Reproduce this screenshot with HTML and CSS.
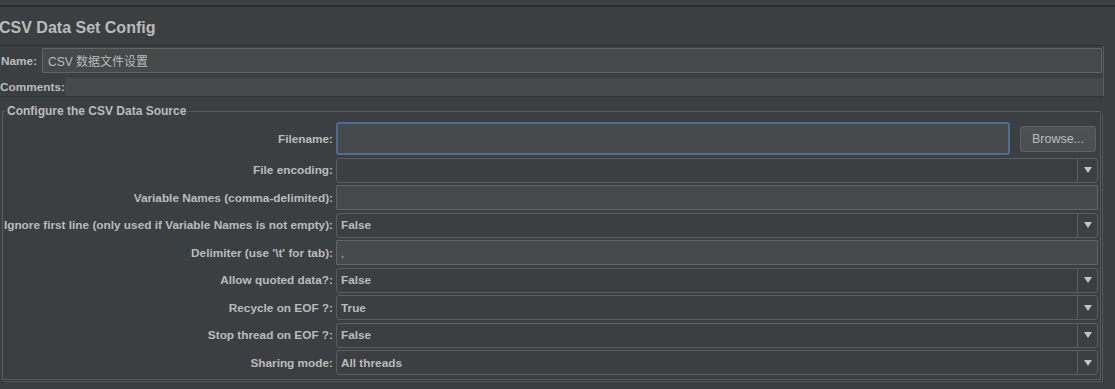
FILE: index.html
```html
<!DOCTYPE html>
<html lang="en">
<head>
    <meta charset="UTF-8">
    <title>CSV Data Set Config</title>
    <link rel="stylesheet" href="styles.css">
</head>
<body>
    <div class="top-strip"></div>

    <h1 class="title">CSV Data Set Config</h1>

    <div class="name-panel">
        <div class="name-row">
            <span class="lbl">Name:</span>
            <div class="text-field">CSV 数据文件设置</div>
        </div>
        <div class="comments-row">
            <span class="lbl">Comments:</span>
            <div class="comments-field"></div>
        </div>
    </div>

    <fieldset class="group">
        <legend>Configure the CSV Data Source</legend>
        <div class="form">
            <label class="row-lbl tall">Filename:</label>
            <div class="file-cell">
                <div class="text-field focused"></div>
                <button class="btn">Browse...</button>
            </div>

            <label class="row-lbl">File encoding:</label>
            <div class="combo"><span class="val"></span><span class="arrow"><svg width="8" height="6" viewBox="0 0 8 6"><polygon points="0,0 8,0 4,6" fill="#c4c4c4"/></svg></span></div>

            <label class="row-lbl">Variable Names (comma-delimited):</label>
            <div class="text-field"></div>

            <label class="row-lbl">Ignore first line (only used if Variable Names is not empty):</label>
            <div class="combo"><span class="val">False</span><span class="arrow"><svg width="8" height="6" viewBox="0 0 8 6"><polygon points="0,0 8,0 4,6" fill="#c4c4c4"/></svg></span></div>

            <label class="row-lbl">Delimiter (use '\t' for tab):</label>
            <div class="text-field plain">,</div>

            <label class="row-lbl">Allow quoted data?:</label>
            <div class="combo"><span class="val">False</span><span class="arrow"><svg width="8" height="6" viewBox="0 0 8 6"><polygon points="0,0 8,0 4,6" fill="#c4c4c4"/></svg></span></div>

            <label class="row-lbl">Recycle on EOF ?:</label>
            <div class="combo"><span class="val">True</span><span class="arrow"><svg width="8" height="6" viewBox="0 0 8 6"><polygon points="0,0 8,0 4,6" fill="#c4c4c4"/></svg></span></div>

            <label class="row-lbl">Stop thread on EOF ?:</label>
            <div class="combo"><span class="val">False</span><span class="arrow"><svg width="8" height="6" viewBox="0 0 8 6"><polygon points="0,0 8,0 4,6" fill="#c4c4c4"/></svg></span></div>

            <label class="row-lbl">Sharing mode:</label>
            <div class="combo"><span class="val">All threads</span><span class="arrow"><svg width="8" height="6" viewBox="0 0 8 6"><polygon points="0,0 8,0 4,6" fill="#c4c4c4"/></svg></span></div>
        </div>
    </fieldset>
</body>
</html>
```

FILE: styles.css
```css
body {
    margin: 0;
    width: 1115px;
    height: 389px;
    overflow: hidden;
    background: #3c3f41;
    color: #bbbbbb;
    font-family: "Liberation Sans", Arial, "Noto Sans CJK SC", sans-serif;
    font-size: 11.8px;
}

.top-strip {
    height: 5px;
    background: #3e4143;
    border-bottom: 2px solid #2b2d2f;
}

.title {
    margin: 11px 0 0 -1px;
    font-size: 16px;
    line-height: 20px;
    font-weight: bold;
    color: #bbbbbb;
}

/* name + comments block */
.name-panel {
    margin-top: 7px;
    width: 1103px;
    border-top: 1px solid #2f3133;
    border-bottom: 1px solid #2f3133;
    border-right: 1px solid #5a5d5f;
    padding-top: 2px;
}

.lbl {
    font-weight: bold;
    white-space: nowrap;
}

.name-row {
    display: flex;
    align-items: center;
    height: 25px;
    padding-left: 1px;
}

.name-row .lbl {
    width: 41px;
}

.name-row .text-field {
    flex: 1;
    margin-right: 1px;
    font-weight: normal;
    padding-left: 5px;
    font-size: 12px;
}

.comments-row {
    display: flex;
    align-items: center;
    height: 18px;
    margin-top: 5px;
}

.comments-row .lbl {
    width: 65px;
}

.comments-field {
    flex: 1;
    height: 18px;
    background: #45494a;
}

/* inputs */
.text-field {
    box-sizing: border-box;
    height: 100%;
    background: #45494a;
    border: 1px solid #646464;
    border-radius: 1px;
    display: flex;
    align-items: center;
    padding-left: 4px;
}

.text-field.plain {
    font-size: 11px;
}

.text-field.focused {
    flex: 1;
    border: 2px solid #46709b;
    border-radius: 3px;
}

.combo {
    box-sizing: border-box;
    display: flex;
    border: 1px solid #5b5e60;
    border-radius: 3px;
    background: #3c3f41;
}

.combo .val {
    flex: 1;
    display: flex;
    align-items: center;
    padding-left: 4px;
    font-weight: bold;
}

.combo .arrow {
    width: 19px;
    border-left: 1px solid #5b5e60;
    display: flex;
    align-items: center;
    justify-content: center;
}

.btn {
    width: 76px;
    height: 26px;
    margin-left: 10px;
    margin-right: 2px;
    background: linear-gradient(#4e5254, #4a4e50);
    border: 1px solid #5e6163;
    border-radius: 3px;
    color: #bbbbbb;
    font-family: inherit;
    font-size: 12.5px;
    padding: 0;
}

/* titled group */
.group {
    margin: 7px 0 0 2px;
    width: 1099px;
    box-sizing: border-box;
    padding: 4px 2px 4px 0;
    border: 1px solid #5a5d5f;
    box-shadow: 1px 1px 0 #323436, 2px 2px 0 #56595b;
    min-width: 0;
}

.group legend {
    margin-left: 2px;
    padding: 0 2px;
    font-size: 12px;
    line-height: 14px;
    font-weight: bold;
}

.form {
    display: grid;
    grid-template-columns: 330px 1fr;
    grid-template-rows: 33px repeat(8, 25px);
    column-gap: 3px;
    row-gap: 2.5px;
}

.row-lbl {
    font-weight: bold;
    text-align: right;
    white-space: nowrap;
    display: flex;
    align-items: center;
    justify-content: flex-end;
}

.file-cell {
    display: flex;
    align-items: center;
}

.file-cell .text-field {
    height: 33px;
}
```
